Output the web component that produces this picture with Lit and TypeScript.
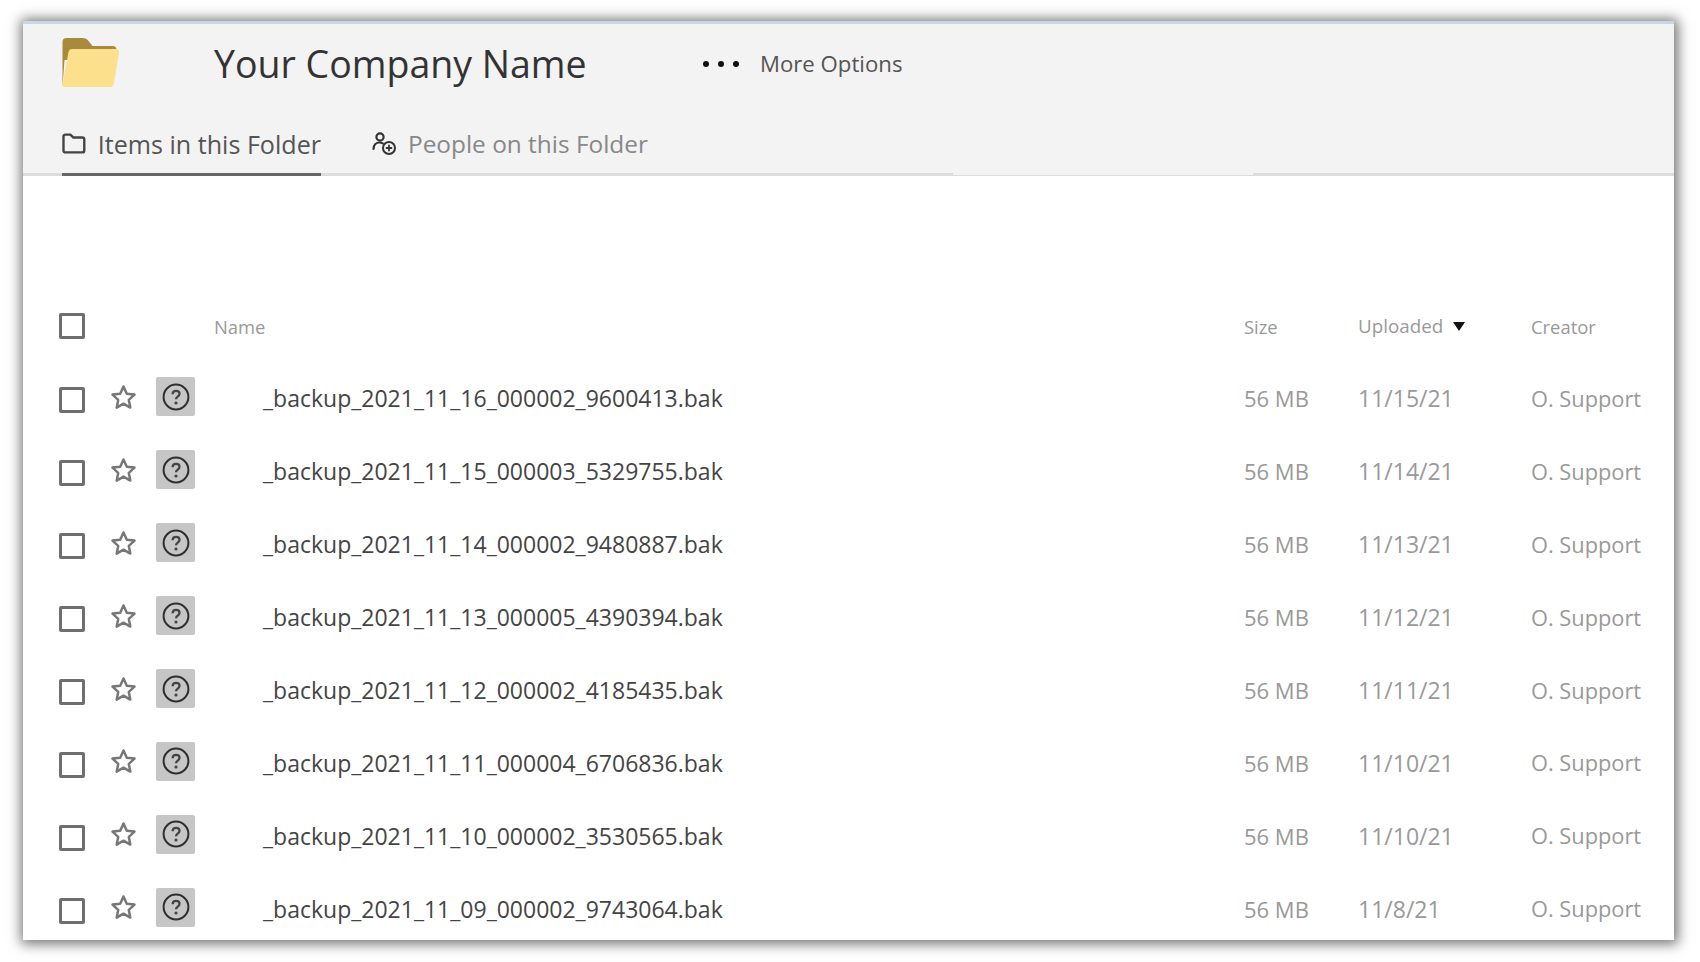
import { LitElement, html, css, svg } from "lit";
import { customElement } from "lit/decorators.js";

const rows = [
  ["_backup_2021_11_16_000002_9600413.bak", "11/15/21"],
  ["_backup_2021_11_15_000003_5329755.bak", "11/14/21"],
  ["_backup_2021_11_14_000002_9480887.bak", "11/13/21"],
  ["_backup_2021_11_13_000005_4390394.bak", "11/12/21"],
  ["_backup_2021_11_12_000002_4185435.bak", "11/11/21"],
  ["_backup_2021_11_11_000004_6706836.bak", "11/10/21"],
  ["_backup_2021_11_10_000002_3530565.bak", "11/10/21"],
  ["_backup_2021_11_09_000002_9743064.bak", "11/8/21"],
];

const star = svg`<svg class="star" width="27" height="27" viewBox="0 0 27 27"><path d="M13.5 2.500l3.300 7.200 7.700.9-5.700 5.300 1.500 7.700-6.800-3.900-6.800 3.900 1.500-7.700-5.700-5.300 7.700-.9z" fill="none" stroke="#777" stroke-width="2.500" stroke-linejoin="round"/></svg>`;
const help = svg`<svg width="28" height="28" viewBox="0 0 28 28"><circle cx="14" cy="14" r="12.400" fill="none" stroke="#2f2f2f" stroke-width="2"/><path d="M10.600 11.200c.1-2.100 1.400-3.300 3.500-3.300 2 0 3.400 1.100 3.400 2.900 0 1.400-.8 2.100-1.800 2.800-1.100.8-1.700 1.300-1.700 2.700" fill="none" stroke="#444" stroke-width="2.300"/><circle cx="14" cy="20" r="1.600" fill="#444"/></svg>`;

@customElement("app-root")
export class AppRoot extends LitElement {
  static styles = css`
    :host { display: block; background: #fff; height: 962px; overflow: hidden;
      font-family: "Open Sans", sans-serif; padding: 21px 26px 22px 23px; box-sizing: border-box; }
    .panel { height: 919px; background: #fff; overflow: hidden; display: flex; flex-direction: column;
      box-shadow: 1px 1px 12px 3px rgba(0,0,0,.55); }
    .head { background: #f3f3f3; border-top: 3px solid #ccd5e3; height: 155px; box-sizing: border-box; padding-left: 39px; display: flex; flex-direction: column; position: relative; }
    .top { display: flex; align-items: center; height: 79px; }
    .logo { width: 58px; height: 49px; margin-right: 94px; margin-top: -2px; display: block; }
    .title { font-size: 37.5px; color: #333; width: 489px; line-height: 1; white-space: nowrap; }
    .dots { display: flex; gap: 9px; width: 57px; box-sizing: border-box; }
    .dots i { width: 6px; height: 6px; border-radius: 50%; background: #111; display: block; }
    .more { font-size: 22.2px; color: #555; }
    .tabs { display: flex; height: 73px; position: relative; z-index: 1; }
    .tab { display: flex; align-items: center; font-size: 24.4px; gap: 12px; box-sizing: border-box; padding-top: 11px; white-space: nowrap; border-bottom: 3px solid transparent; }
    .tab.on { color: #555; border-bottom-color: #666; width: 259px; font-size: 25.1px; }
    .tab.off { color: #888; margin-left: 51px; gap: 12px; }
    .rule { position: absolute; left: 0; right: 0; bottom: 0; height: 3px; display: grid; grid-template-columns: 930px 300px 1fr; align-items: end; }
    .rule i { display: block; height: 3px; background: #dcdcdc; }
    .rule i.thin { height: 1px; }
    .table { margin-top: 114px; }
    .row { display: grid; grid-template-columns: 48px 49px 58px 1030px 114px 173px 1fr; padding-left: 36px; height: 72.9px; align-items: center; font-size: 21.8px; color: #999; }
    .row.th { font-size: 18.4px; height: 72px; }
    .cb { width: 26px; height: 26px; box-sizing: border-box; border: 3px solid #6f6f6f; border-radius: 2px; background: #fff; display: block; }
    .row.item .cb { margin-top: 4px; }
    .star { display: block; margin-left: 3px; margin-top: -2px; }
    .q { width: 39px; height: 39px; background: #c6c6c6; border-radius: 2px; display: flex; align-items: center; justify-content: center; margin-top: -3px; }
    .file { color: #444; padding-left: 49px; white-space: nowrap; font-size: 23px; }
    .date { font-size: 23px; }
    .size { font-size: 22px; }
    .up { display: flex; align-items: center; gap: 10px; font-size: 18.8px; }
    .tri { width: 0; height: 0; border-left: 6px solid transparent; border-right: 6px solid transparent; border-top: 9px solid #111; display: block; }
  `;

  render() {
    return html`<div class="panel">
      <div class="head">
        <div class="top">
          <svg class="logo" viewBox="0 0 57 49">
            <path d="M0 4q0-4 4-4h16q4 0 6 3l4 5h20q4 0 4 4v10H2l-2 27z" fill="#a98a3c"/>
            <path d="M6 14q.5-3 4-3h43q4 0 3.500 4l-5 30q-.5 4-4 4H2q-2.500 0-2-3z" fill="#fde08b"/>
          </svg>
          <div class="title">Your Company Name</div>
          <div class="dots"><i></i><i></i><i></i></div>
          <div class="more">More Options</div>
        </div>
        <div class="rule"><i></i><i class="thin"></i><i></i></div>
        <div class="tabs">
          <div class="tab on">
            <svg width="24" height="21" viewBox="0 0 24 21"><path d="M1.500 3.500q0-2 2-2h5l3 3h9q2 0 2 2v11q0 2-2 2h-17q-2 0-2-2z" fill="none" stroke="#444" stroke-width="2.400" stroke-linejoin="round"/></svg>
            Items in this Folder
          </div>
          <div class="tab off">
            <svg width="24" height="24" viewBox="0 0 24 24"><circle cx="8" cy="5" r="3.600" fill="none" stroke="#333" stroke-width="2.200"/><path d="M1.500 17c.3-4 2.500-6.500 6-6.500 1.300 0 2.300.3 3.300.9" fill="none" stroke="#333" stroke-width="2.200" stroke-linecap="round"/><circle cx="17" cy="16" r="6" fill="none" stroke="#333" stroke-width="2"/><path d="M13.800 16h6.400M17 12.800v6.400" stroke="#333" stroke-width="1.800"/></svg>
            People on this Folder
          </div>
        </div>
      </div>
      <div class="table">
        <div class="row th">
          <span class="cb"></span><span></span><span></span>
          <span>Name</span><span>Size</span>
          <span class="up">Uploaded <i class="tri"></i></span>
          <span>Creator</span>
        </div>
        ${rows.map(([n, d]) => html`<div class="row item">
          <span class="cb"></span>
          ${star}
          <span class="q">${help}</span>
          <span class="file">${n}</span>
          <span class="size">56 MB</span>
          <span class="date">${d}</span>
          <span>O. Support</span>
        </div>`)}
      </div>
    </div>`;
  }
}
